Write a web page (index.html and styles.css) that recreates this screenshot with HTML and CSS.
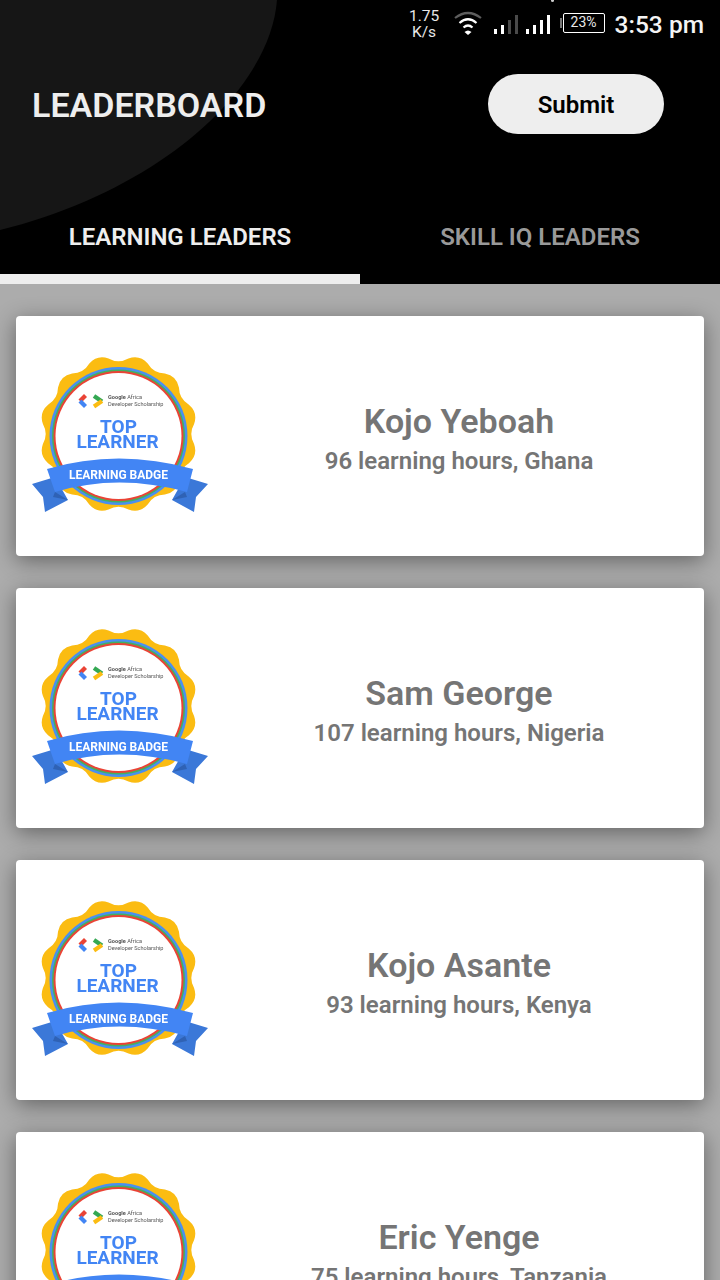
FILE: index.html
```html
<!DOCTYPE html>
<html lang="en">
<head>
<meta charset="utf-8">
<title>Leaderboard</title>
<link rel="stylesheet" href="styles.css">
</head>
<body>
<svg class="defs" aria-hidden="true">
  <symbol id="badge-art" viewBox="0 0 200 180">
    <g transform="translate(98.5 89) rotate(7.5) scale(1.03)">
      <path fill="#fbbc12" d="M74 0Q79.3 10.5 71.5 19.2Q62.8 26 64.1 37Q63.4 48.7 52.3 52.3Q41.4 53.9 37 64.1Q30.6 73.9 19.2 71.5Q8.9 67.4 0 74Q-10.5 79.3 -19.2 71.5Q-26 62.8 -37 64.1Q-48.7 63.4 -52.3 52.3Q-53.9 41.4 -64.1 37Q-73.9 30.6 -71.5 19.2Q-67.4 8.9 -74 0Q-79.3 -10.5 -71.5 -19.2Q-62.8 -26 -64.1 -37Q-63.4 -48.7 -52.3 -52.3Q-41.4 -53.9 -37 -64.1Q-30.6 -73.9 -19.2 -71.5Q-8.9 -67.4 0 -74Q10.5 -79.3 19.2 -71.5Q26 -62.8 37 -64.1Q48.7 -63.4 52.3 -52.3Q53.9 -41.4 64.1 -37Q73.9 -30.6 71.5 -19.2Q67.4 -8.9 74 0Z"/>
    </g>
    <circle cx="98.5" cy="91" r="69" fill="#4a8ff0"/>
    <circle cx="98.5" cy="91" r="66.500" fill="#43b060"/>
    <circle cx="98.5" cy="91" r="65" fill="#ea4335"/>
    <circle cx="98.5" cy="91" r="63" fill="#fff"/>
    <path fill="#3b78d8" d="M12 139L35 132L48 155L25 167L23 152Z"/>
    <path fill="#3b78d8" d="M188 139L165 132L152 155L174 167L176 152Z"/>
    <path fill="#2f62b5" d="M35 147L48 155L33 152Z"/>
    <path fill="#2f62b5" d="M165 147L152 155L167 152Z"/>
    <path fill="#4285f4" d="M27 124Q98 103 173 124L167 147Q98 128 35 147Z"/>
    <path fill="none" stroke="#ea4335" stroke-width="4.200" d="M65.500 50.500L60 56"/>
    <path fill="none" stroke="#4285f4" stroke-width="4.200" d="M60 56L65.500 61.500"/>
    <path fill="none" stroke="#34a853" stroke-width="4.200" d="M74 51L82 56.500"/>
    <path fill="none" stroke="#fbbc12" stroke-width="4.200" d="M82 56L74 61.500"/>
  </symbol>
</svg>

<header class="top">
  <svg class="swoosh" viewBox="0 0 300 240" aria-hidden="true"><path d="M277 0C270 90 160 190 0 230L0 0Z"/></svg>
  <span class="notif-dot"></span>
  <div class="status">
    <div class="speed"><span>1.75</span><span>K/s</span></div>
    <svg class="wifi" viewBox="0 0 30 26" aria-hidden="true">
      <path class="wifi-dim" d="M2 8Q15 -2 28 8"/>
      <path class="wifi-on" d="M6.500 13Q15 5.500 23.500 13"/>
      <path class="wifi-on" d="M10.500 17.500Q15 13.500 19.500 17.500"/>
      <path class="wifi-fill" d="M11.500 22Q15 19 18.500 22L15 25Z"/>
    </svg>
    <svg class="signal" viewBox="0 0 58 22" aria-hidden="true">
      <rect x="0" y="15" width="3" height="5" fill="#fff"/>
      <rect x="7" y="11" width="3" height="9" fill="#fff"/>
      <rect x="14" y="6" width="3" height="14" fill="#4a4a4a"/>
      <rect x="21" y="1" width="3" height="19" fill="#4a4a4a"/>
      <rect x="32" y="15" width="3" height="5" fill="#fff"/>
      <rect x="39" y="11" width="3" height="9" fill="#fff"/>
      <rect x="46" y="6" width="3" height="14" fill="#fff"/>
      <rect x="53" y="1" width="3" height="19" fill="#fff"/>
    </svg>
    <div class="battery"><span class="battery-cap"></span><span class="battery-body">23%</span></div>
    <span class="clock">3:53 pm</span>
  </div>
  <div class="toolbar">
    <h1 class="title">LEADERBOARD</h1>
    <button class="submit">Submit</button>
  </div>
  <nav class="tabs">
    <a class="tab tab-active">LEARNING LEADERS</a>
    <a class="tab">SKILL IQ LEADERS</a>
  </nav>
</header>

<main class="list">
  <article class="card">
    <svg class="badge" viewBox="0 0 200 180" role="img" aria-label="Top learner badge">
      <use href="#badge-art"/>
      <text class="b-brand" x="88" y="54"><tspan font-weight="700">Google</tspan> Africa</text>
      <text class="b-brand" x="88" y="61">Developer Scholarship</text>
      <text class="b-top" x="98.500" y="88">TOP</text>
      <text class="b-top" x="97.500" y="103">LEARNER</text>
      <text class="b-label" x="98.500" y="134">LEARNING BADGE</text>
    </svg>
    <div class="info">
      <h2 class="name">Kojo Yeboah</h2>
      <p class="hours">96 learning hours, Ghana</p>
    </div>
  </article>
  <article class="card">
    <svg class="badge" viewBox="0 0 200 180" role="img" aria-label="Top learner badge">
      <use href="#badge-art"/>
      <text class="b-brand" x="88" y="54"><tspan font-weight="700">Google</tspan> Africa</text>
      <text class="b-brand" x="88" y="61">Developer Scholarship</text>
      <text class="b-top" x="98.500" y="88">TOP</text>
      <text class="b-top" x="97.500" y="103">LEARNER</text>
      <text class="b-label" x="98.500" y="134">LEARNING BADGE</text>
    </svg>
    <div class="info">
      <h2 class="name">Sam George</h2>
      <p class="hours">107 learning hours, Nigeria</p>
    </div>
  </article>
  <article class="card">
    <svg class="badge" viewBox="0 0 200 180" role="img" aria-label="Top learner badge">
      <use href="#badge-art"/>
      <text class="b-brand" x="88" y="54"><tspan font-weight="700">Google</tspan> Africa</text>
      <text class="b-brand" x="88" y="61">Developer Scholarship</text>
      <text class="b-top" x="98.500" y="88">TOP</text>
      <text class="b-top" x="97.500" y="103">LEARNER</text>
      <text class="b-label" x="98.500" y="134">LEARNING BADGE</text>
    </svg>
    <div class="info">
      <h2 class="name">Kojo Asante</h2>
      <p class="hours">93 learning hours, Kenya</p>
    </div>
  </article>
  <article class="card">
    <svg class="badge" viewBox="0 0 200 180" role="img" aria-label="Top learner badge">
      <use href="#badge-art"/>
      <text class="b-brand" x="88" y="54"><tspan font-weight="700">Google</tspan> Africa</text>
      <text class="b-brand" x="88" y="61">Developer Scholarship</text>
      <text class="b-top" x="98.500" y="88">TOP</text>
      <text class="b-top" x="97.500" y="103">LEARNER</text>
      <text class="b-label" x="98.500" y="134">LEARNING BADGE</text>
    </svg>
    <div class="info">
      <h2 class="name">Eric Yenge</h2>
      <p class="hours">75 learning hours, Tanzania</p>
    </div>
  </article>
</main>
</body>
</html>
```

FILE: styles.css
```css
* { box-sizing: border-box; }
html, body { margin: 0; height: 1280px; overflow: hidden; }
body { background: #acacac; font-family: Roboto, "Liberation Sans", sans-serif; }
.defs { position: absolute; width: 0; height: 0; }

.top { position: relative; height: 284px; background: #000; display: flex; flex-direction: column; overflow: hidden; }
.swoosh { position: absolute; left: 0; top: 0; width: 300px; height: 240px; fill: #161616; }
.notif-dot { position: absolute; left: 551px; top: -1px; width: 3px; height: 3px; border-radius: 50%; background: #ccc; }

.status { position: relative; flex: none; height: 48px; display: flex; align-items: flex-start; justify-content: flex-end; padding-right: 16px; color: #fff; }
.speed { display: flex; flex-direction: column; align-items: center; margin-top: 8px; width: 32px; font-size: 15.500px; line-height: 16px; color: #e8e8e8; }
.wifi { width: 30px; height: 26px; margin: 10px 0 0 12.500px; }
.wifi-dim, .wifi-on { fill: none; stroke-width: 2.200; }
.wifi-dim { stroke: #5e5e5e; }
.wifi-on { stroke: #fff; }
.wifi-fill { fill: #fff; }
.signal { width: 58px; height: 22px; margin: 14px 0 0 11px; }
.battery { display: flex; align-items: center; margin: 13px 0 0 8px; }
.battery-cap { width: 2px; height: 10px; background: #777; margin-right: 1px; }
.battery-body { width: 42px; height: 20px; border: 1.500px solid #fff; border-radius: 2px; font-size: 14px; line-height: 17px; text-align: center; color: #e8e8e8; }
.clock { margin: 11px 0 0 10px; font-size: 24.500px; line-height: 28px; font-weight: 500; color: #f4f4f4; }

.toolbar { position: relative; flex: none; height: 112px; display: flex; align-items: center; justify-content: space-between; padding: 0 56px 0 32px; }
.title { margin: 0; padding-top: 2px; font-size: 34px; font-weight: 600; color: #eee; }
.submit { width: 176px; height: 60px; padding: 2px 0 0; border: 0; border-radius: 30px; background: #eee; color: #000; font: 600 24px Roboto, sans-serif; }

.tabs { position: relative; flex: 1; display: flex; }
.tab { flex: 1; display: flex; justify-content: center; padding-top: 61px; font-size: 24px; line-height: 32px; font-weight: 600; color: #999; }
.tab-active { color: #eee; border-bottom: 10px solid #eee; }

.list { display: flex; flex-direction: column; gap: 32px; padding: 32px 16px 0; }
.card { flex: none; height: 240px; display: flex; align-items: center; padding: 0 6px 0 4px; background: #fff; border-radius: 4px; box-shadow: 0 5px 22px rgba(0,0,0,.42); }
.badge { flex: none; width: 200px; height: 180px; margin-top: -2px; filter: blur(.3px); }
.b-brand { font: 400 5.600px Roboto, sans-serif; fill: #555; }
.b-top { font: 700 19px Roboto, sans-serif; fill: #4285f4; text-anchor: middle; }
.b-label { font: 700 12px Roboto, sans-serif; fill: #fff; text-anchor: middle; }

.info { flex: 1; display: flex; flex-direction: column; align-items: center; padding-top: 10px; }
.name { margin: 0; font-size: 34px; line-height: 40px; font-weight: 600; color: #757575; }
.hours { margin: 0; font-size: 24px; line-height: 40px; font-weight: 600; color: #757575; }
```
